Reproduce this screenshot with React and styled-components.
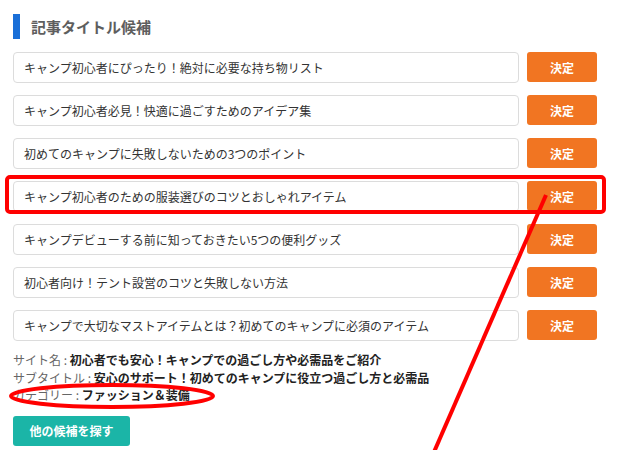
import React from "react";
import styled, { createGlobalStyle } from "styled-components";

const Global = createGlobalStyle`
  html, body { margin: 0; padding: 0; background: #fff; }
  body { font-family: "Noto Sans CJK JP", "Noto Sans", sans-serif; color: #333; }
`;

const Page = styled.div`
  position: relative;
  width: 617px;
  height: 450px;
  overflow: hidden;
  box-sizing: border-box;
  padding: 14px 20px 0 13px;
`;

const Heading = styled.h2`
  display: flex;
  align-items: center;
  gap: 11px;
  margin: 0;
  height: 25px;
  font-size: 15px;
  font-weight: 700;
  color: #5e5e5e;
  line-height: 25px;
  &::before {
    content: "";
    width: 7px;
    height: 25px;
    background: #1a6fd8;
  }
`;

const List = styled.div`
  display: flex;
  flex-direction: column;
  gap: 12px;
  margin-top: 13px;
`;

const Row = styled.div`
  display: grid;
  grid-template-columns: 1fr 70px;
  gap: 8px;
  height: 31px;
`;

const TitleBox = styled.div`
  display: flex;
  align-items: center;
  box-sizing: border-box;
  padding: 0 10px;
  border: 1px solid #dcdcdc;
  border-radius: 4px;
  background: #fff;
  font-size: 12px;
  color: #333;
  white-space: nowrap;
`;

const DecideButton = styled.button`
  border: none;
  border-radius: 3px;
  background: #f17522;
  color: #fff;
  font-family: inherit;
  font-size: 12px;
  font-weight: 700;
  height: 30px;
  padding: 0;
`;

const Info = styled.div`
  margin-top: 10px;
  font-size: 12px;
  line-height: 17.5px;
`;

const InfoLine = styled.div`
  white-space: nowrap;
`;

const Label = styled.span`
  color: #666;
`;

const Value = styled.span`
  color: #222;
  font-weight: 700;
`;

const MoreButton = styled.button`
  display: block;
  margin-top: 12px;
  width: 117px;
  height: 30px;
  border: none;
  border-radius: 3px;
  background: #1bb5a7;
  color: #fff;
  font-family: inherit;
  font-size: 12px;
  font-weight: 700;
  padding: 0;
`;

const Annotations = styled.svg`
  position: absolute;
  left: 0;
  top: 0;
  pointer-events: none;
`;

const titles = [
  "キャンプ初心者にぴったり！絶対に必要な持ち物リスト",
  "キャンプ初心者必見！快適に過ごすためのアイデア集",
  "初めてのキャンプに失敗しないための3つのポイント",
  "キャンプ初心者のための服装選びのコツとおしゃれアイテム",
  "キャンプデビューする前に知っておきたい5つの便利グッズ",
  "初心者向け！テント設営のコツと失敗しない方法",
  "キャンプで大切なマストアイテムとは？初めてのキャンプに必須のアイテム",
];

export default function App() {
  return (
    <>
      <Global />
      <Page>
        <Heading>記事タイトル候補</Heading>
        <List>
          {titles.map((t) => (
            <Row key={t}>
              <TitleBox>{t}</TitleBox>
              <DecideButton>決定</DecideButton>
            </Row>
          ))}
        </List>
        <Info>
          <InfoLine>
            <Label>サイト名 : </Label>
            <Value>初心者でも安心！キャンプでの過ごし方や必需品をご紹介</Value>
          </InfoLine>
          <InfoLine>
            <Label>サブタイトル : </Label>
            <Value>安心のサポート！初めてのキャンプに役立つ過ごし方と必需品</Value>
          </InfoLine>
          <InfoLine>
            <Label>カテゴリー : </Label>
            <Value>ファッション＆装備</Value>
          </InfoLine>
        </Info>
        <MoreButton>他の候補を探す</MoreButton>
        <Annotations width="617" height="450" viewBox="0 0 617 450">
          <rect x="7" y="177" width="597" height="35" rx="3" fill="none" stroke="#ff0000" strokeWidth="4" />
          <ellipse cx="112" cy="396" rx="101" ry="11" fill="none" stroke="#ff0000" strokeWidth="4" />
          <line x1="546" y1="195" x2="434" y2="452" stroke="#ff0000" strokeWidth="4" />
        </Annotations>
      </Page>
    </>
  );
}
